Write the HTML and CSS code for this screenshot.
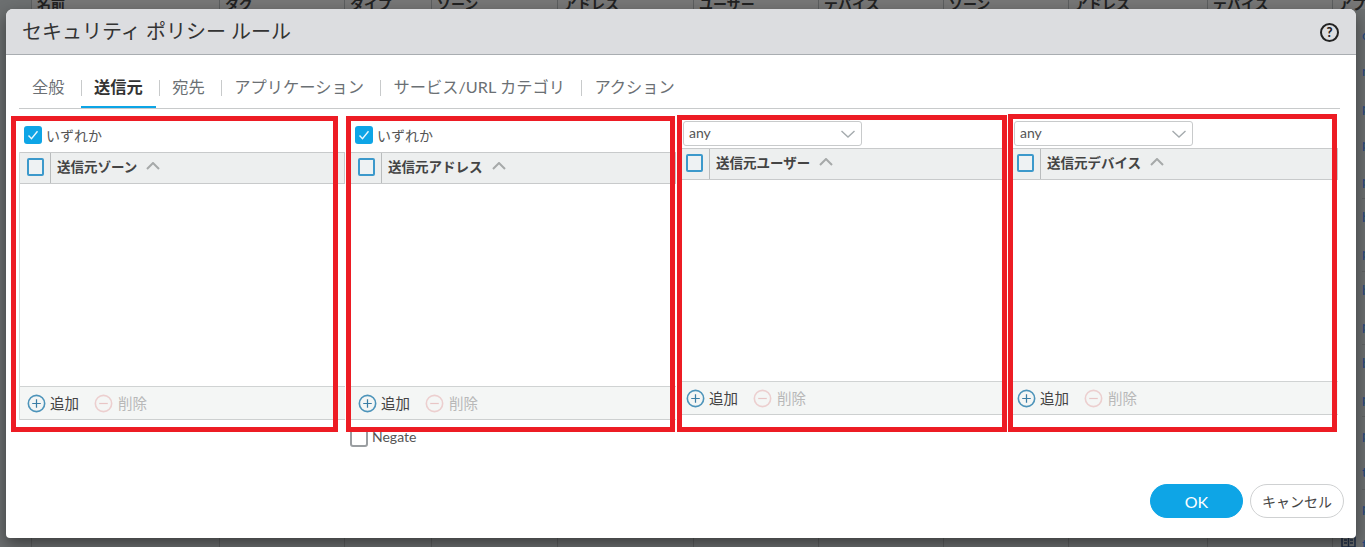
FILE: index.html
```html
<!DOCTYPE html>
<html lang="ja">
<head>
<meta charset="utf-8">
<title>セキュリティ ポリシー ルール</title>
<link rel="stylesheet" href="styles.css">
</head>
<body>
<div class="page">
  <div class="page-col c1"><div class="page-head">名前</div></div>
  <div class="page-col c2"><div class="page-head">タグ</div></div>
  <div class="page-col c3"><div class="page-head">タイプ</div></div>
  <div class="page-col c4"><div class="page-head">ゾーン</div></div>
  <div class="page-col c5"><div class="page-head">アドレス</div></div>
  <div class="page-col c6"><div class="page-head">ユーザー</div></div>
  <div class="page-col c7"><div class="page-head">デバイス</div></div>
  <div class="page-col c8"><div class="page-head">ゾーン</div></div>
  <div class="page-col c9"><div class="page-head">アドレス</div></div>
  <div class="page-col c10"><div class="page-head">デバイス</div></div>
  <div class="page-col c11">
    <div class="page-head">アプ</div>
    <div class="page-rows">
      <div class="page-row">c</div>
      <div class="page-row">n</div>
      <div class="page-row">p</div>
      <div class="page-row">p</div>
      <div class="page-row line">p</div>
      <div class="page-row">b</div>
      <div class="page-row line">p</div>
      <div class="page-row">b</div>
      <div class="page-row line">p</div>
      <div class="page-row">b</div>
      <div class="page-row line">p</div>
      <div class="page-row">p</div>
      <div class="page-row line">t</div>
      <div class="page-row">p</div>
      <div class="page-row">t</div>
    </div>
  </div>
</div>
<svg class="corner-icon" width="15" height="12" viewBox="0 0 15 12"><path d="M1 1h13v11H1zM7.500 1v11M3 5h3M9 5h3M3 8h3M9 8h3" fill="none" stroke="#1d2d44" stroke-width="1.5"/></svg>

<section class="dialog">
  <header class="dialog-head">
    <h1 class="dialog-title">セキュリティ ポリシー ルール</h1>
    <span class="help">?</span>
  </header>

  <nav class="tabs">
    <a class="tab">全般</a>
    <i class="tab-sep"></i>
    <a class="tab active">送信元</a>
    <i class="tab-sep"></i>
    <a class="tab">宛先</a>
    <i class="tab-sep"></i>
    <a class="tab">アプリケーション</a>
    <i class="tab-sep"></i>
    <a class="tab">サービス/URL カテゴリ</a>
    <i class="tab-sep"></i>
    <a class="tab">アクション</a>
  </nav>

  <div class="columns">
    <div class="col">
      <label class="any-row"><span class="check on"><svg width="14" height="14" viewBox="0 0 14 14"><path d="M2.500 7.500l3 3.200 6-7.500" fill="none" stroke="#eaf7fd" stroke-width="1.400"/></svg></span>いずれか</label>
      <div class="panel tall">
        <div class="panel-head"><span class="head-check"><span class="box"></span></span><span class="head-label">送信元ゾーン</span><svg class="sort" width="14" height="8" viewBox="0 0 14 8"><path d="M1 7l6-6 6 6" fill="none" stroke="#a6a9a9" stroke-width="2"/></svg></div>
        <div class="panel-body"></div>
        <div class="panel-foot">
          <span class="action"><svg class="ico" width="19" height="19" viewBox="0 0 20 20"><circle cx="10" cy="10" r="8.600" fill="none" stroke="#4d94ba" stroke-width="1.700"/><path d="M10 5.500v9M5.500 10h9" stroke="#3a7da5" stroke-width="1.300"/></svg><span class="action-label">追加</span></span>
          <span class="action off"><svg class="ico" width="19" height="19" viewBox="0 0 20 20"><circle cx="10" cy="10" r="8.600" fill="none" stroke="#eccfcf" stroke-width="1.700"/><path d="M5.500 10h9" stroke="#e8c5c5" stroke-width="1.300"/></svg><span class="action-label">削除</span></span>
        </div>
      </div>
    </div>

    <div class="col">
      <label class="any-row"><span class="check on"><svg width="14" height="14" viewBox="0 0 14 14"><path d="M2.500 7.500l3 3.200 6-7.500" fill="none" stroke="#eaf7fd" stroke-width="1.400"/></svg></span>いずれか</label>
      <div class="panel tall">
        <div class="panel-head"><span class="head-check"><span class="box"></span></span><span class="head-label">送信元アドレス</span><svg class="sort" width="14" height="8" viewBox="0 0 14 8"><path d="M1 7l6-6 6 6" fill="none" stroke="#a6a9a9" stroke-width="2"/></svg></div>
        <div class="panel-body"></div>
        <div class="panel-foot">
          <span class="action"><svg class="ico" width="19" height="19" viewBox="0 0 20 20"><circle cx="10" cy="10" r="8.600" fill="none" stroke="#4d94ba" stroke-width="1.700"/><path d="M10 5.500v9M5.500 10h9" stroke="#3a7da5" stroke-width="1.300"/></svg><span class="action-label">追加</span></span>
          <span class="action off"><svg class="ico" width="19" height="19" viewBox="0 0 20 20"><circle cx="10" cy="10" r="8.600" fill="none" stroke="#eccfcf" stroke-width="1.700"/><path d="M5.500 10h9" stroke="#e8c5c5" stroke-width="1.300"/></svg><span class="action-label">削除</span></span>
        </div>
      </div>
      <label class="negate"><span class="check plain"></span><span class="negate-label">Negate</span></label>
    </div>

    <div class="col free">
      <div class="select-row"><div class="select"><span class="select-value">any</span><svg width="16" height="8" viewBox="0 0 16 8"><path d="M1.500 1l6.500 6 6.500-6" fill="none" stroke="#a5abae" stroke-width="1.400"/></svg></div></div>
      <div class="panel">
        <div class="panel-head"><span class="head-check"><span class="box"></span></span><span class="head-label">送信元ユーザー</span><svg class="sort" width="14" height="8" viewBox="0 0 14 8"><path d="M1 7l6-6 6 6" fill="none" stroke="#a6a9a9" stroke-width="2"/></svg></div>
        <div class="panel-body"></div>
        <div class="panel-foot">
          <span class="action"><svg class="ico" width="19" height="19" viewBox="0 0 20 20"><circle cx="10" cy="10" r="8.600" fill="none" stroke="#4d94ba" stroke-width="1.700"/><path d="M10 5.500v9M5.500 10h9" stroke="#3a7da5" stroke-width="1.300"/></svg><span class="action-label">追加</span></span>
          <span class="action off"><svg class="ico" width="19" height="19" viewBox="0 0 20 20"><circle cx="10" cy="10" r="8.600" fill="none" stroke="#eccfcf" stroke-width="1.700"/><path d="M5.500 10h9" stroke="#e8c5c5" stroke-width="1.300"/></svg><span class="action-label">削除</span></span>
        </div>
      </div>
    </div>

    <div class="col free">
      <div class="select-row"><div class="select"><span class="select-value">any</span><svg width="16" height="8" viewBox="0 0 16 8"><path d="M1.500 1l6.500 6 6.500-6" fill="none" stroke="#a5abae" stroke-width="1.400"/></svg></div></div>
      <div class="panel">
        <div class="panel-head"><span class="head-check"><span class="box"></span></span><span class="head-label">送信元デバイス</span><svg class="sort" width="14" height="8" viewBox="0 0 14 8"><path d="M1 7l6-6 6 6" fill="none" stroke="#a6a9a9" stroke-width="2"/></svg></div>
        <div class="panel-body"></div>
        <div class="panel-foot">
          <span class="action"><svg class="ico" width="19" height="19" viewBox="0 0 20 20"><circle cx="10" cy="10" r="8.600" fill="none" stroke="#4d94ba" stroke-width="1.700"/><path d="M10 5.500v9M5.500 10h9" stroke="#3a7da5" stroke-width="1.300"/></svg><span class="action-label">追加</span></span>
          <span class="action off"><svg class="ico" width="19" height="19" viewBox="0 0 20 20"><circle cx="10" cy="10" r="8.600" fill="none" stroke="#eccfcf" stroke-width="1.700"/><path d="M5.500 10h9" stroke="#e8c5c5" stroke-width="1.300"/></svg><span class="action-label">削除</span></span>
        </div>
      </div>
    </div>
  </div>

  <footer class="dialog-foot">
    <button class="btn primary">OK</button>
    <button class="btn">キャンセル</button>
  </footer>

  <div class="mark m1"></div>
  <div class="mark m2"></div>
  <div class="mark m3"></div>
  <div class="mark m4"></div>
</section>
</body>
</html>
```
FILE: styles.css
```css
* { box-sizing: border-box; }
html, body { margin: 0; height: 100%; overflow: hidden; }
body {
  background: #6c6f70;
  font-family: "Lato", "Noto Sans CJK JP", sans-serif;
  color: #333;
  font-size: 14px;
}

/* page behind the modal */
.page {
  display: grid;
  grid-template-columns: 31px 188px 125px 87px 126px 136px 125px 125px 125px 139px 125px 33px;
  height: 547px;
}
.page-col { border-left: 1px solid #5c5e5f; overflow: hidden; }
.c1 { grid-column: 2; }
.page-head {
  height: 9px;
  padding-left: 5px;
  background: #777;
  color: #222;
  font-weight: 700;
  font-size: 14px;
  line-height: 8px;
  white-space: nowrap;
}
.page-rows { margin-top: 8px; padding-left: 29px; }
.page-row {
  height: 36.4px;
  color: #24477f;
  font-size: 14px;
  line-height: 36px;
}
.page-row.line { border-bottom: 1px solid #606263; }
.corner-icon { position: absolute; left: 1341px; top: 535px; }

/* dialog */
.dialog {
  position: absolute;
  left: 6px;
  top: 9px;
  width: 1350px;
  height: 529px;
  display: flex;
  flex-direction: column;
  background: #fff;
  border-radius: 7px 7px 4px 4px;
  box-shadow: 0 6px 16px rgba(0, 0, 0, .45);
}
.dialog-head {
  flex: none;
  height: 46px;
  display: flex;
  align-items: center;
  justify-content: space-between;
  padding: 0 17px 2px 16px;
  background: #dcdde0;
  border-bottom: 1px solid #a9adb1;
  border-radius: 7px 7px 0 0;
}
.dialog-title {
  margin: 0;
  font-size: 20px;
  font-weight: 400;
  line-height: 28px;
  color: #333;
}
.help {
  width: 19px;
  height: 19px;
  margin-top: 4px;
  display: flex;
  align-items: center;
  justify-content: center;
  border: 2px solid #222;
  border-radius: 50%;
  font-size: 13px;
  font-weight: 900;
  color: #222;
  line-height: 1;
}

/* tabs */
.tabs {
  flex: none;
  display: flex;
  margin: 20px 16px 0 13px;
  height: 34px;
  border-bottom: 1px solid #c8cacb;
}
.tab {
  height: 33px;
  padding: 0 13px;
  font-size: 16.25px;
  line-height: 24px;
  color: #6b7074;
  white-space: nowrap;
  border-bottom: 2px solid transparent;
}
.tab.active {
  font-weight: 700;
  color: #333;
  border-bottom-color: #0da5e6;
}
.tab-sep {
  flex: none;
  width: 1px;
  height: 16px;
  margin: 5px -1px 0 3.5px;
  background: #c8cacb;
}

/* columns */
.columns {
  flex: none;
  display: grid;
  grid-template-columns: repeat(4, 326px);
  column-gap: 5px;
  margin: 12px 0 0 13px;
}
.col { display: flex; flex-direction: column; }
.col.free .panel { margin-left: -3px; }
.any-row {
  display: flex;
  align-items: center;
  height: 31px;
  padding: 5px 0 8px 5px;
  font-size: 14px;
  color: #555;
}
.check {
  flex: none;
  width: 18px;
  height: 18px;
  margin-right: 4px;
  display: flex;
  align-items: center;
  justify-content: center;
  border-radius: 3px;
}
.check.on { background: #0ea5e6; }
.check.plain {
  border: 2px solid #9a9ea1;
  background: #fff;
}

.select-row { height: 27px; padding-left: 2px; }
.select {
  width: 179px;
  height: 25px;
  display: flex;
  align-items: center;
  justify-content: space-between;
  padding: 0 5px;
  border: 1px solid #c8cacb;
  border-radius: 3px;
  font-size: 14px;
  color: #555;
}
.select-value { padding-bottom: 2px; }

.panel {
  height: 267px;
  display: flex;
  flex-direction: column;
  border-left: 1px solid #d8dada;
}
.panel.tall { height: 268px; }
.panel-head {
  flex: none;
  height: 32px;
  display: flex;
  align-items: center;
  background: #edefef;
  border-top: 1px solid #c8cacb;
  border-bottom: 1px solid #c8cacb;
  border-right: 1px solid #c8cacb;
}
.head-check {
  flex: none;
  width: 31px;
  height: 100%;
  display: flex;
  align-items: center;
  padding: 0 0 2px 7px;
  border-right: 1px solid #b9bcbd;
}
.box {
  width: 17px;
  height: 18px;
  border: 2px solid #3c99cb;
  border-radius: 2px;
  background: #eef2f3;
}
.head-label {
  margin-left: 6px;
  padding-bottom: 4px;
  font-size: 13.5px;
  font-weight: 700;
  color: #444;
  white-space: nowrap;
}
.sort { margin: 0 0 4px 9px; }
.panel-body { flex: 1; }
.panel-foot {
  flex: none;
  height: 34px;
  display: flex;
  align-items: center;
  gap: 15px;
  padding-left: 7px;
  background: #f4f6f5;
  border-top: 1px solid #d0d3d3;
  border-bottom: 1px solid #cdd0d0;
}
.action {
  display: flex;
  align-items: center;
  gap: 4px;
  font-size: 14.5px;
  color: #444;
}
.action-label { padding-bottom: 2px; }
.action.off { gap: 5px; color: #b8b8b8; }
.ico { flex: none; }

.negate {
  display: flex;
  align-items: center;
  margin: 8px 0 0;
  font-size: 14px;
  color: #555;
  line-height: 17px;
}
.negate-label { padding-bottom: 2px; }

/* footer */
.dialog-foot {
  margin-top: auto;
  display: flex;
  justify-content: flex-end;
  gap: 7px;
  padding: 0 12px 20px 0;
}
.btn {
  width: 94px;
  height: 34px;
  padding: 0;
  border: 1px solid #cfd1d2;
  border-radius: 17px;
  background: #fff;
  font: 14px "Lato", "Noto Sans CJK JP", sans-serif;
  color: #444;
}
.btn.primary {
  width: 93px;
  border-color: #0ea5e6;
  background: #0ea5e6;
  color: #fff;
  font-size: 16px;
}

/* red annotation frames */
.mark {
  position: absolute;
  border: 5px solid #ed1c24;
  pointer-events: none;
}
.m1 { left: 5px; top: 107px; width: 327px; height: 316px; }
.m2 { left: 340px; top: 107px; width: 329px; height: 316px; }
.m3 { left: 671px; top: 106px; width: 330px; height: 317px; }
.m4 { left: 1002px; top: 105px; width: 329px; height: 318px; }
```
